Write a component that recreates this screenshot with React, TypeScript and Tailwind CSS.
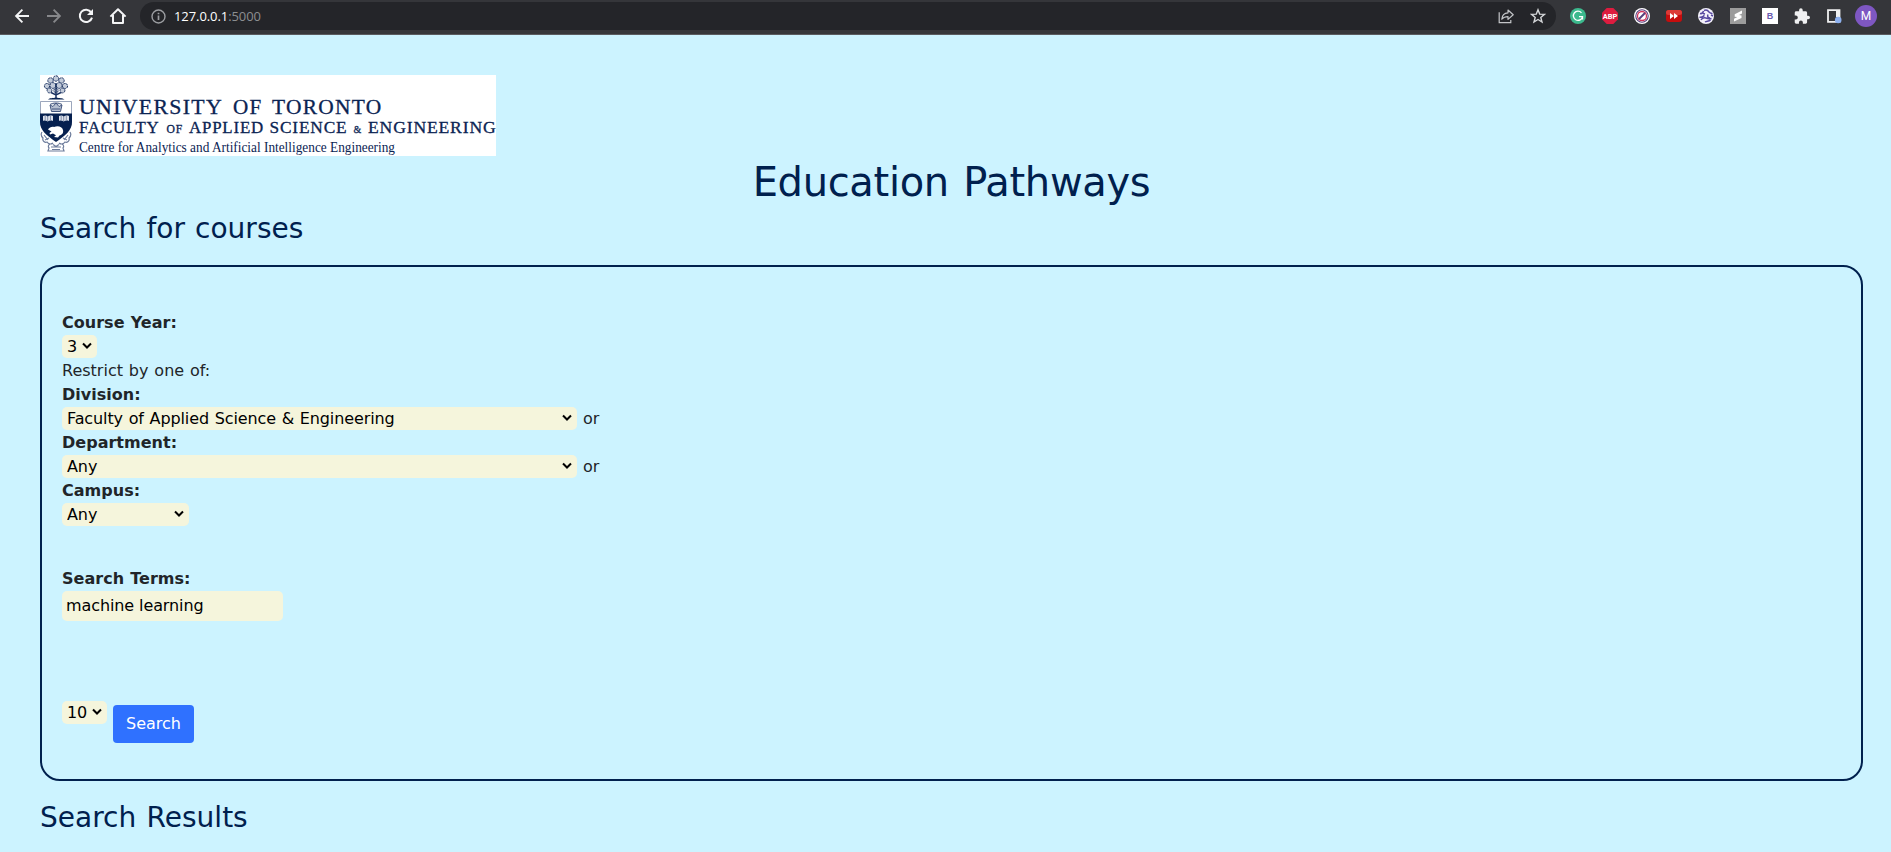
import React from "react";

function Cell({ children }: { children: React.ReactNode }) {
  return <div className="flex h-8 w-8 shrink-0 items-center justify-center">{children}</div>;
}

function BackIcon({ color }: { color: string }) {
  return (
    <svg width="16" height="16" viewBox="0 0 16 16" fill="none" stroke={color} strokeWidth="1.9">
      <path d="M15 8H2.4M8.4 1.7 2.1 8l6.3 6.3" />
    </svg>
  );
}

function BrowserBar() {
  return (
    <div className="flex h-[35px] items-start border-b border-[#5a5b5f] bg-[#35363a]">
      <div className="flex w-[140px] shrink-0 pl-[6px]">
        <Cell><BackIcon color="#f4f5f6" /></Cell>
        <Cell><div className="rotate-180"><BackIcon color="#87888b" /></div></Cell>
        <Cell>
          <svg width="16" height="16" viewBox="0 0 16 16" fill="none">
            <path d="M13.2 4.4A6.2 6.2 0 1 0 14 9.6" stroke="#f4f5f6" strokeWidth="2" />
            <path d="M15 1v6H9z" fill="#f4f5f6" />
          </svg>
        </Cell>
        <Cell>
          <svg width="18" height="18" viewBox="0 0 18 18" fill="none" stroke="#f4f5f6" strokeWidth="2">
            <path d="M1.4 9.6 9 2.2l7.6 7.4M4 8v8h10V8" strokeLinejoin="round" />
          </svg>
        </Cell>
      </div>
      <div className="mt-[2px] flex h-7 w-[1416px] shrink-0 items-center rounded-full bg-[#242529] pl-[11px] pr-[10px]">
        <svg width="15" height="15" viewBox="0 0 15 15" fill="none" stroke="#9b9da1" strokeWidth="1.4">
          <circle cx="7.5" cy="7.5" r="6.5" />
          <path d="M7.5 6.6v4.4M7.5 3.7v1.6" strokeWidth="1.7" />
        </svg>
        <div className="ml-2 grow font-['Open_Sans',sans-serif] text-[13px] leading-5 tracking-[-0.08px] text-white">
          127.0.0.1<span className="text-[#8c8e91]">:5000</span>
        </div>
        <svg className="mr-4" width="16" height="16" viewBox="0 0 16 16" fill="none" stroke="#c3c5c8" strokeWidth="1.2">
          <path d="M1.200 4.200v10.400h11.600v-2.600" />
          <path d="M3.800 11.200c.3-4.200 2.500-6.200 6.200-6.400V2l5.200 4.700-5.200 4.700V8.600c-2.700 0-4.600.7-6.200 2.600z" strokeLinejoin="round" />
        </svg>
        <svg width="16" height="16" viewBox="0 0 16 16" fill="none" stroke="#d5d7d9" strokeWidth="1.4">
          <path d="m8 1.800 1.700 4.300 4.700.3-3.600 3 1.200 4.600-4-2.500L4 14l1.200-4.600-3.600-3 4.700-.3z" />
        </svg>
      </div>
      <div className="flex pl-[6px]">
        <Cell>
          <svg width="16" height="16" viewBox="0 0 16 16" fill="none">
            <circle cx="8" cy="8" r="8" fill="#3cb98d" />
            <path d="M11.5 4.800A4.600 4.600 0 1 0 12.500 8.600H9M12.500 8.600v3" stroke="#fff" strokeWidth="1.3" />
          </svg>
        </Cell>
        <Cell>
          <svg width="16" height="16" viewBox="0 0 16 16">
            <path d="M4.700 0h6.600L16 4.700v6.600L11.300 16H4.700L0 11.300V4.700z" fill="#dd1c3f" />
            <text x="8" y="10.800" fontSize="8" fontWeight="700" fill="#fff" textAnchor="middle" fontFamily="Roboto, sans-serif" textLength="14.500" lengthAdjust="spacingAndGlyphs">ABP</text>
          </svg>
        </Cell>
        <Cell>
          <svg width="16" height="16" viewBox="0 0 16 16" fill="none">
            <circle cx="8" cy="8" r="8" fill="#fff" />
            <circle cx="8" cy="8" r="6.200" stroke="#55407e" strokeWidth="1.100" />
            <circle cx="8" cy="8" r="4.500" stroke="#d0335a" strokeWidth="1.300" />
            <path d="m5 11 6-6" stroke="#55407e" strokeWidth="1.900" />
          </svg>
        </Cell>
        <Cell>
          <svg width="16" height="12" viewBox="0 0 16 12">
            <rect width="16" height="12" rx="3" fill="#c50d0d" />
            <rect width="16" height="5" rx="2.500" fill="#dc3a36" />
            <path d="M4 3v6l4-3zM8 3v6l4-3z" fill="#fff" />
          </svg>
        </Cell>
        <Cell>
          <svg width="16" height="16" viewBox="0 0 16 16" fill="none">
            <circle cx="8" cy="8" r="8" fill="#f4f2fb" />
            <path d="M2 5.500c2 .5 3-.5 3.500-2.500M1.500 9c2.500 1 3.500-1 5-1.500M6 2.500c2-1 4 0 5 1.500 1 1.200 2 1.500 3.500 1.500M10 6.500c-1 2 0 3 2 3.500M3 12c1-2 3-2.500 5-2 2 .5 3.500 1 5.500.5M7 14c1.500-1 4-.5 5.500-2M5 5.500l2 .5M13 7l2 1" stroke="#5648a0" strokeWidth="1.500" />
          </svg>
        </Cell>
        <Cell>
          <svg width="16" height="16" viewBox="0 0 16 16">
            <path d="M0 0h16v16H0z" fill="#9c9c9c" />
            <path d="M12 2.600 4.700 6.200v2.600l2.600.2L4 10.700v2.800l7.500-3.600V7.400L9 7.100l3-1.600z" fill="#fff" />
          </svg>
        </Cell>
        <Cell>
          <div className="flex h-4 w-4 items-center justify-center bg-white font-['Liberation_Sans',sans-serif] text-[9px] font-bold leading-none text-[#6a5bb0]">B</div>
        </Cell>
        <Cell>
          <svg width="16" height="16" viewBox="1 0.5 22 22" fill="#eff0f1">
            <path d="M20.500 11H19V7c0-1.100-.9-2-2-2h-4V3.500a2.500 2.500 0 0 0-5 0V5H4c-1.100 0-1.990.9-1.990 2v3.800H3.500c1.490 0 2.700 1.210 2.700 2.700s-1.210 2.700-2.700 2.700H2V20c0 1.100.9 2 2 2h3.800v-1.500c0-1.490 1.210-2.700 2.700-2.700s2.700 1.210 2.700 2.700V22H17c1.100 0 2-.9 2-2v-4h1.500a2.500 2.500 0 0 0 0-5z" />
          </svg>
        </Cell>
        <Cell>
          <svg width="16" height="16" viewBox="0 0 16 16" fill="none">
            <path d="M2 2.200h11.500v11.600H2z" stroke="#eff0f1" strokeWidth="1.800" />
            <path d="M10 2h4v7h-4z" fill="#eff0f1" />
            <circle cx="12.200" cy="12" r="3.300" fill="#8db1f0" />
          </svg>
        </Cell>
        <Cell>
          <div className="flex h-[22px] w-[22px] shrink-0 items-center justify-center rounded-full bg-[#7e57c2] font-[Roboto,sans-serif] text-[12px] leading-none text-white">M</div>
        </Cell>
      </div>
    </div>
  );
}

function Word({ x, y, size, length, children }: { x: number; y: number; size: number; length: number; children: string }) {
  return (
    <text x={x} y={y} fontSize={size} textLength={length} lengthAdjust="spacingAndGlyphs">{children}</text>
  );
}

function Logo() {
  return (
    <svg className="block bg-white" width="456" height="81" viewBox="0 0 456 81">
      <g fill="#c3cbd9" stroke="#1d3463" strokeWidth="1" strokeDasharray="2.400 .7">
        <circle cx="16" cy="3.500" r="2.700" /><circle cx="10.500" cy="5.500" r="2.700" /><circle cx="21.500" cy="5.500" r="2.700" />
        <circle cx="7" cy="11" r="2.600" /><circle cx="25" cy="11" r="2.600" /><circle cx="12.800" cy="10.500" r="2.900" />
        <circle cx="19.200" cy="10.500" r="2.900" /><circle cx="9.500" cy="15.500" r="2.400" /><circle cx="22.500" cy="15.500" r="2.400" />
        <circle cx="16" cy="15.500" r="2.200" />
      </g>
      <path d="M16 8v15M11 17.500l5 2.500 5-2.500" fill="none" stroke="#1d3463" strokeWidth="1.500" />
      <path d="M8 24.500c2-2 4-1 8-2 4 1 6 0 8.500 2z" fill="#0b2453" />
      <path d="M.5 26.500h31V47c0 7-6 11-15.500 17C6.500 58 .5 54 .5 47z" fill="#fff" stroke="#8390ac" strokeWidth=".8" />
      <path d="M0 38.500h32V47c0 8-6 13-16 20C6 60 0 55 0 47z" fill="#06204f" />
      <path d="M11.500 36.500 10 30l3 1.500L16 28l3 3.500 3-1.500-1.500 6.500zM10 29.500c3-2 9-2 12 0M12 34h8" fill="#b6bfd0" stroke="#42557e" strokeWidth="1" />
      <path d="M3 41c2-1 3.500-.5 4.700.4C9 40.500 11 40.200 13 41v5c-2-.7-3.700-.5-5.300.4C6 45.500 4.500 45.400 3 46zM19 41c2-1 3.500-.5 4.700.4 1.300-.9 3.300-1.200 5.300-.4v5c-2-.7-3.700-.5-5.300.4-1.700-.9-3.200-1-4.700-.4z" fill="#dce1ea" />
      <path d="M7.700 41v5M23.700 41v5M5.200 41v4M10.500 41v4M21.200 41v4M26.300 41v4" stroke="#4a5b82" strokeWidth=".6" />
      <path d="M8 54.500c1.500-2 3.500-3 6-2.500 4-1.500 8-.5 9 3 .7 3-1 5-3.500 5.500l-1.500 2-4-.5 2-1.800-3-1.700-3 1-.5-1.500 2-1.500z" fill="#fff" />
      <g fill="none" stroke="#6d7c9c" strokeWidth="1.200">
        <path d="M2 57c-2 3 0 5 1 6-1 3 2 5 4 4 2 3 5 2 6 1M30 57c2 3 0 5-1 6 1 3-2 5-4 4-2 3-5 2-6 1M4 60l4 5M28 60l-4 5M5 65l4-2M27 65l-4-2" />
        <path d="M10 69c-2 1-2 3-1 4l-1 3h16l-1-3c1-1 1-3-1-4M11 72h10M12 74.500h8M13 69.500l3 2 3-2" />
      </g>
      <g fill="#0b2453" stroke="#0b2453" strokeWidth=".3" fontFamily="'Liberation Serif', serif">
        <g letterSpacing="1.200">
          <Word x={39} y={39.3} size={20} length={144}>UNIVERSITY</Word>
          <Word x={193} y={39.3} size={20} length={29.5}>OF</Word>
          <Word x={232} y={39.3} size={20} length={110.5}>TORONTO</Word>
        </g>
        <g letterSpacing="0.800">
          <Word x={39} y={58.4} size={16.5} length={80.5}>FACULTY</Word>
          <Word x={126.5} y={58.4} size={11.5} length={16.5}>OF</Word>
          <Word x={149} y={58.4} size={16.5} length={75}>APPLIED</Word>
          <Word x={229.500} y={58.4} size={16.5} length={78}>SCIENCE</Word>
          <Word x={313.500} y={58.4} size={10.5} length={8.5}>&amp;</Word>
          <Word x={328} y={58.4} size={16.5} length={128.5}>ENGINEERING</Word>
        </g>
        <g strokeWidth="0">
          <Word x={39} y={77.2} size={14.5} length={316}>Centre for Analytics and Artificial Intelligence Engineering</Word>
        </g>
      </g>
    </svg>
  );
}

function Select({ value, width }: { value: string; width: string }) {
  return (
    <div className={"relative h-[23px] shrink-0 " + width}>
      <select className="block h-full w-full appearance-none rounded-[5px] bg-[#f5f5dc] pl-[5px] text-base leading-[23px] tracking-[-0.1px] [word-spacing:0.7px] text-black outline-none">
        <option>{value}</option>
      </select>
      <svg className="pointer-events-none absolute right-[5px] top-[7px]" width="10" height="8" viewBox="0 0 10 8" fill="none" stroke="#000" strokeWidth="2">
        <path d="m1 1.500 4 4 4-4" />
      </svg>
    </div>
  );
}

function Label({ children }: { children: React.ReactNode }) {
  return <div className="h-6 whitespace-nowrap font-bold tracking-[0.02px] [word-spacing:0.6px]">{children}</div>;
}

export default function App() {
  return (
    <div className="flex h-[852px] w-[1891px] flex-col overflow-hidden bg-[#ccf3ff] font-['DejaVu_Sans',Verdana,sans-serif] text-base leading-6 text-[#212529]">
      <BrowserBar />
      <main className="flex flex-col pl-10 pr-7 pt-10">
        <Logo />
        <h1 className="mt-[2px] h-12 text-center text-[40px] leading-[48px] tracking-[-0.32px] [word-spacing:2px] text-[#00204e]">Education Pathways</h1>
        <h2 className="mt-[6px] h-[34px] text-[28px] leading-[34px] [word-spacing:1.3px] text-[#00204e]">Search for courses</h2>
        <form className="mt-[19px] flex h-[516px] flex-col rounded-[20px] border-2 border-[#00204e] pl-5 pt-11" onSubmit={(e) => e.preventDefault()}>
          <Label>Course Year:</Label>
          <div className="flex h-6"><Select value="3" width="w-[35px]" /></div>
          <div className="h-6 [word-spacing:0.8px]">Restrict by one of:</div>
          <Label>Division:</Label>
          <div className="flex h-6 gap-[6px]"><Select value="Faculty of Applied Science & Engineering" width="w-[515px]" />or</div>
          <Label>Department:</Label>
          <div className="flex h-6 gap-[6px]"><Select value="Any" width="w-[515px]" />or</div>
          <Label>Campus:</Label>
          <div className="flex h-6"><Select value="Any" width="w-[127px]" /></div>
          <div className="mt-10"><Label>Search Terms:</Label></div>
          <input defaultValue="machine learning" className="h-[30px] w-[221px] rounded-[5px] bg-[#f5f5dc] px-1 pb-[2px] text-base tracking-[-0.1px] text-black outline-none" />
          <div className="mt-20 flex gap-[6px]">
            <Select value="10" width="w-[45px]" />
            <button className="mt-1 h-[38px] w-[81px] rounded-[4px] bg-[#2f71ff] text-center text-base leading-6 text-white">Search</button>
          </div>
        </form>
        <h2 className="mt-5 h-[34px] text-[28px] leading-[34px] [word-spacing:1.5px] text-[#00204e]">Search Results</h2>
      </main>
    </div>
  );
}
